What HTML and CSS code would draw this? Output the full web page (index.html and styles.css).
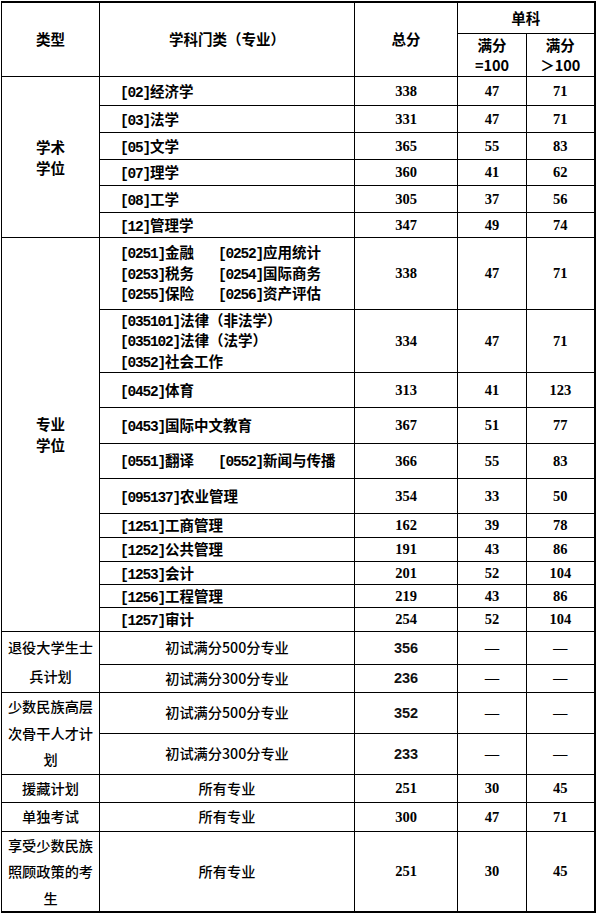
FILE: index.html
```html
<!DOCTYPE html>
<html lang="zh-CN">
<head>
<meta charset="utf-8">
<title>复试分数线</title>
<link rel="stylesheet" href="styles.css">
</head>
<body>
<table class="score">
  <colgroup>
    <col class="c1"><col class="c2"><col class="c3"><col class="c4"><col class="c5">
  </colgroup>
  <tr class="r31">
    <th rowspan="2">类型</th>
    <th rowspan="2">学科门类（专业）</th>
    <th rowspan="2">总分</th>
    <th colspan="2">单科</th>
  </tr>
  <tr class="r43">
    <th>满分<br>=100</th>
    <th>满分<br>＞100</th>
  </tr>

  <tr class="r29">
    <td rowspan="6" class="type">学术<br>学位</td>
    <td class="name"><span class="code">[02]</span>经济学</td>
    <td class="num">338</td><td class="num">47</td><td class="num">71</td>
  </tr>
  <tr class="r27">
    <td class="name"><span class="code">[03]</span>法学</td>
    <td class="num">331</td><td class="num">47</td><td class="num">71</td>
  </tr>
  <tr class="r27">
    <td class="name"><span class="code">[05]</span>文学</td>
    <td class="num">365</td><td class="num">55</td><td class="num">83</td>
  </tr>
  <tr class="r26">
    <td class="name"><span class="code">[07]</span>理学</td>
    <td class="num">360</td><td class="num">41</td><td class="num">62</td>
  </tr>
  <tr class="r27">
    <td class="name"><span class="code">[08]</span>工学</td>
    <td class="num">305</td><td class="num">37</td><td class="num">56</td>
  </tr>
  <tr class="r25">
    <td class="name"><span class="code">[12]</span>管理学</td>
    <td class="num">347</td><td class="num">49</td><td class="num">74</td>
  </tr>

  <tr class="r72">
    <td rowspan="11" class="type">专业<br>学位</td>
    <td class="name">
      <div class="pair">
        <span class="line"><span class="code">[0251]</span>金融</span><span class="line"><span class="code">[0252]</span>应用统计</span>
        <span class="line"><span class="code">[0253]</span>税务</span><span class="line"><span class="code">[0254]</span>国际商务</span>
        <span class="line"><span class="code">[0255]</span>保险</span><span class="line"><span class="code">[0256]</span>资产评估</span>
      </div>
    </td>
    <td class="num">338</td><td class="num">47</td><td class="num">71</td>
  </tr>
  <tr class="r63">
    <td class="name">
      <div class="line"><span class="code">[035101]</span>法律（非法学）</div>
      <div class="line"><span class="code">[035102]</span>法律（法学）</div>
      <div class="line"><span class="code">[0352]</span>社会工作</div>
    </td>
    <td class="num">334</td><td class="num">47</td><td class="num">71</td>
  </tr>
  <tr class="r35">
    <td class="name"><span class="code">[0452]</span>体育</td>
    <td class="num">313</td><td class="num">41</td><td class="num">123</td>
  </tr>
  <tr class="r36">
    <td class="name"><span class="code">[0453]</span>国际中文教育</td>
    <td class="num">367</td><td class="num">51</td><td class="num">77</td>
  </tr>
  <tr class="r35">
    <td class="name">
      <div class="pair">
        <span class="line"><span class="code">[0551]</span>翻译</span><span class="line"><span class="code">[0552]</span>新闻与传播</span>
      </div>
    </td>
    <td class="num">366</td><td class="num">55</td><td class="num">83</td>
  </tr>
  <tr class="r35">
    <td class="name"><span class="code">[095137]</span>农业管理</td>
    <td class="num">354</td><td class="num">33</td><td class="num">50</td>
  </tr>
  <tr class="r24">
    <td class="name"><span class="code">[1251]</span>工商管理</td>
    <td class="num">162</td><td class="num">39</td><td class="num">78</td>
  </tr>
  <tr class="r24">
    <td class="name"><span class="code">[1252]</span>公共管理</td>
    <td class="num">191</td><td class="num">43</td><td class="num">86</td>
  </tr>
  <tr class="r23">
    <td class="name"><span class="code">[1253]</span>会计</td>
    <td class="num">201</td><td class="num">52</td><td class="num">104</td>
  </tr>
  <tr class="r23">
    <td class="name"><span class="code">[1256]</span>工程管理</td>
    <td class="num">219</td><td class="num">43</td><td class="num">86</td>
  </tr>
  <tr class="r24">
    <td class="name"><span class="code">[1257]</span>审计</td>
    <td class="num">254</td><td class="num">52</td><td class="num">104</td>
  </tr>

  <tr class="r33">
    <td rowspan="2" class="plan plan-tall">退役大学生士兵计划</td>
    <td class="plan">初试满分500分专业</td>
    <td class="snum">356</td><td class="dash">—</td><td class="dash">—</td>
  </tr>
  <tr class="r28">
    <td class="plan">初试满分300分专业</td>
    <td class="snum">236</td><td class="dash">—</td><td class="dash">—</td>
  </tr>
  <tr class="r41">
    <td rowspan="2" class="plan">少数民族高层次骨干人才计划</td>
    <td class="plan">初试满分500分专业</td>
    <td class="snum">352</td><td class="dash">—</td><td class="dash">—</td>
  </tr>
  <tr class="r41">
    <td class="plan">初试满分300分专业</td>
    <td class="snum">233</td><td class="dash">—</td><td class="dash">—</td>
  </tr>
  <tr class="r28">
    <td class="plan">援藏计划</td>
    <td class="plan">所有专业</td>
    <td class="num">251</td><td class="num">30</td><td class="num">45</td>
  </tr>
  <tr class="r29">
    <td class="plan">单独考试</td>
    <td class="plan">所有专业</td>
    <td class="num">300</td><td class="num">47</td><td class="num">71</td>
  </tr>
  <tr class="r81">
    <td class="plan">享受少数民族照顾政策的考生</td>
    <td class="plan">所有专业</td>
    <td class="num">251</td><td class="num">30</td><td class="num">45</td>
  </tr>
</table>
</body>
</html>
```

FILE: styles.css
```css
html, body {
  margin: 0;
  padding: 0;
  background: #ffffff;
}

.score {
  border-collapse: collapse;
  table-layout: fixed;
  width: 593px;
  margin: 1px 0 0 1px;
  border: 2px solid #000;
  border-left-width: 1px;
  font-family: "Noto Sans CJK SC", sans-serif;
  font-size: 14.5px;
  font-weight: 700;
  color: #000;
}

.c1 { width: 98px; }
.c2 { width: 255px; }
.c3 { width: 103px; }
.c4 { width: 69px; }
.c5 { width: 68px; }

.score th,
.score td {
  border: 1px solid #000;
  padding: 0;
  text-align: center;
  vertical-align: middle;
  line-height: 20px;
  font-weight: 700;
}

.score .type {
  line-height: 21px;
}

.score .name {
  text-align: left;
  padding-left: 20px;
}

.pair {
  display: grid;
  grid-template-columns: 98px auto;
}

.line {
  display: block;
  height: 20.5px;
  line-height: 20.5px;
  white-space: nowrap;
}

.code {
  font-family: "Liberation Mono", monospace;
  letter-spacing: -1.2px;
  line-height: 1;
}

.score .num {
  font-family: "Liberation Serif", serif;
}

.score .plan {
  font-weight: 500;
  font-size: 14.2px;
  color: #000;
  padding: 0 2px;
  line-height: 26.5px;
}

.score .plan-tall {
  line-height: 29px;
}

.score .snum {
  font-family: "Liberation Sans", sans-serif;
  color: #111;
}

.score .dash {
  font-family: "Liberation Sans", sans-serif;
  font-weight: 400;
}

.r23 { height: 23px; }
.r24 { height: 24px; }
.r25 { height: 25px; }
.r26 { height: 26px; }
.r27 { height: 27px; }
.r28 { height: 28px; }
.r29 { height: 29px; }
.r31 { height: 31px; }
.r33 { height: 33px; }
.r35 { height: 35px; }
.r36 { height: 36px; }
.r41 { height: 41px; }
.r43 { height: 43px; }
.r63 { height: 63px; }
.r72 { height: 72px; }
.r81 { height: 81px; }
```
